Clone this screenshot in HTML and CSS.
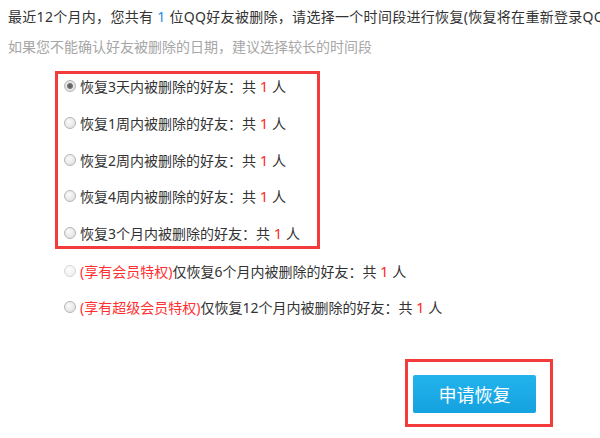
FILE: index.html
```html
<!DOCTYPE html>
<html lang="zh-CN">
<head>
  <meta charset="UTF-8">
  <title>恢复好友</title>
  <link rel="stylesheet" href="styles.css">
</head>
<body>
  <div class="page">
    <p class="intro">最近12个月内，您共有 <span class="num-blue">1</span> 位QQ好友被删除，请选择一个时间段进行恢复(恢复将在重新登录QQ后生效)</p>
    <p class="hint">如果您不能确认好友被删除的日期，建议选择较长的时间段</p>

    <div class="options highlight">
      <label class="option"><input type="radio" name="range" checked><span>恢复3天内被删除的好友：共 <span class="num-red">1</span> 人</span></label>
      <label class="option"><input type="radio" name="range"><span>恢复1周内被删除的好友：共 <span class="num-red">1</span> 人</span></label>
      <label class="option"><input type="radio" name="range"><span>恢复2周内被删除的好友：共 <span class="num-red">1</span> 人</span></label>
      <label class="option"><input type="radio" name="range"><span>恢复4周内被删除的好友：共 <span class="num-red">1</span> 人</span></label>
      <label class="option"><input type="radio" name="range"><span>恢复3个月内被删除的好友：共 <span class="num-red">1</span> 人</span></label>
    </div>

    <div class="options vip">
      <label class="option"><input type="radio" name="range" disabled><span><span class="privilege">(享有会员特权)</span>仅恢复6个月内被删除的好友：共 <span class="num-red">1</span> 人</span></label>
      <label class="option"><input type="radio" name="range"><span><span class="privilege">(享有超级会员特权)</span>仅恢复12个月内被删除的好友：共 <span class="num-red">1</span> 人</span></label>
    </div>

    <div class="submit-wrap highlight">
      <button type="button" class="submit-button">申请恢复</button>
    </div>
  </div>
</body>
</html>
```

FILE: styles.css
```css
body {
  margin: 0;
  padding: 0;
  background-color: #fff;
  font-family: "Noto Sans", "Noto Sans CJK SC", sans-serif;
  font-size: 14px;
  color: #333;
}
.page {
  padding: 2px 0 0 8px;
  overflow: hidden;
}
p {
  margin: 0;
  line-height: 30px;
  white-space: nowrap;
}
.intro {
  letter-spacing: 0.3px;
}
.hint {
  color: #a6a6a6;
}
.num-blue {
  color: #1a8ee1;
}
.num-red {
  color: #ff2a2a;
  font-size: 15px;
}
.privilege {
  color: #ff3030;
}
.highlight {
  border: 3px solid #f43b3b;
}
.options {
  display: flex;
  flex-direction: column;
  gap: 12.75px;
}
.options.highlight {
  width: 253px;
  height: 172px;
  margin: 9px 0 0 47px;
  padding-left: 6px;
  box-sizing: content-box;
}
.options.vip {
  margin: 10px 0 0 56px;
  gap: 12px;
}
.option {
  display: flex;
  align-items: center;
  height: 24px;
  white-space: pre;
  cursor: pointer;
}
.option input {
  appearance: none;
  -webkit-appearance: none;
  width: 12px;
  height: 12px;
  margin: 0 4px 0 0;
  border: 1px solid #b5b5b5;
  border-radius: 50%;
  background: radial-gradient(circle at 40% 35%, #fafafa, #dcdcdc);
  box-sizing: border-box;
  flex-shrink: 0;
}
.option input:checked {
  background: radial-gradient(circle, #555 0, #777 2.5px, #e6e6e6 3.5px, #dcdcdc);
}
.option input:disabled {
  border-color: #d6d6d6;
  background: radial-gradient(circle at 40% 35%, #fcfcfc, #ececec);
}
.submit-wrap {
  width: 148px;
  height: 68px;
  margin: 40px 0 0 397px;
  padding: 13px 0 0 5px;
  box-sizing: border-box;
}
.submit-button {
  display: block;
  width: 123px;
  height: 38px;
  border: none;
  border-radius: 2px;
  background: linear-gradient(#22b3ec, #15a2e0);
  color: #fff;
  font-family: "Noto Sans CJK SC", sans-serif;
  font-size: 18px;
  cursor: pointer;
}
.submit-button:hover {
  background: #1598d4;
}
```
